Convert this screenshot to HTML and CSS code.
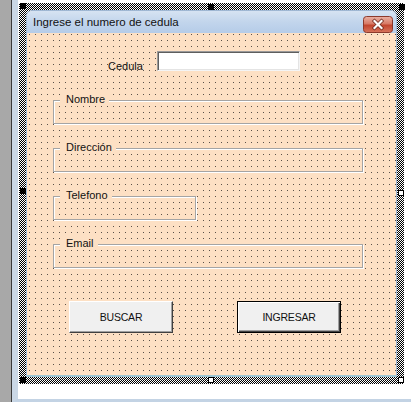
FILE: index.html
```html
<!DOCTYPE html>
<html>
<head>
<meta charset="utf-8">
<title>UserForm</title>
<link rel="stylesheet" href="styles.css">
</head>
<body>
<div class="side"></div>
<div class="canvas">
  <div class="sel">
    <span class="h h-tl"></span>
    <span class="h h-tm"></span>
    <span class="h h-tr"></span>
    <span class="h h-ml"></span>
    <span class="h hollow h-mr"></span>
    <span class="h h-bl"></span>
    <span class="h hollow h-bm"></span>
    <span class="h hollow h-br"></span>
    <div class="form">
      <div class="titlebar">
        <span class="title">Ingrese el numero de cedula</span>
        <span class="close">
          <svg width="30" height="17" viewBox="0 0 30 17">
            <defs>
              <linearGradient id="cg" x1="0" y1="0" x2="0" y2="1">
                <stop offset="0" stop-color="#eab2a5"/>
                <stop offset="0.45" stop-color="#d77a66"/>
                <stop offset="0.55" stop-color="#c2462f"/>
                <stop offset="1" stop-color="#d7745c"/>
              </linearGradient>
            </defs>
            <rect x="0.5" y="0.5" width="29" height="16" rx="3" fill="url(#cg)" stroke="#8c3a2c"/>
            <path d="M11.5 5 L18.5 12 M18.5 5 L11.5 12" stroke="#6a2418" stroke-width="3.6" stroke-linecap="square"/>
            <path d="M11.5 5 L18.5 12 M18.5 5 L11.5 12" stroke="#ffffff" stroke-width="2.2" stroke-linecap="square"/>
          </svg>
        </span>
      </div>
      <div class="body">
        <div class="row-cedula">
          <span class="lbl">Cedula</span>
          <div class="textbox"></div>
        </div>
        <div class="frame"><span class="legend">Nombre</span></div>
        <div class="frame"><span class="legend">Dirección</span></div>
        <div class="frame narrow"><span class="legend">Telefono</span></div>
        <div class="frame"><span class="legend">Email</span></div>
        <div class="buttons">
          <div class="btn">BUSCAR</div>
          <div class="btn default">INGRESAR</div>
        </div>
      </div>
    </div>
  </div>
</div>
</body>
</html>
```

FILE: styles.css
```css
html, body {
  margin: 0;
  height: 100%;
}

body {
  display: flex;
  background: #ffffff;
  font-family: "Liberation Sans", Arial, sans-serif;
  overflow: hidden;
}

.side {
  flex: none;
  width: 11px;
  background: #a8a8a8;
  border-right: 1px solid #3a3a3a;
}

.canvas {
  flex: 1;
  height: 402px;
  box-sizing: border-box;
  background: #ffffff;
  border-left: 6px solid #cad7e5;
  border-bottom: 3px solid #c3d3e4;
  padding-top: 3px;
}

.sel {
  position: relative;
  margin-left: 1px;
  width: 385px;
  height: 381px;
  box-sizing: border-box;
  padding: 7px;
  background: repeating-conic-gradient(#000 0 25%, #fff 0 50%) 0 0 / 2px 2px;
}

.h {
  position: absolute;
  width: 6px;
  height: 6px;
  box-sizing: border-box;
  background: #000;
}

.h.hollow {
  background: #fff;
  border: 1px solid #000;
}

.h-tl { left: 1px; top: 0; }
.h-tm { left: 189px; top: 1px; }
.h-tr { left: 380px; top: 1px; }
.h-ml { left: 1px; top: 185px; }
.h-mr { left: 379px; top: 187px; }
.h-bl { left: 1px; top: 374px; }
.h-bm { left: 189px; top: 374px; }
.h-br { left: 379px; top: 374px; }

.form {
  width: 371px;
  height: 367px;
  box-sizing: border-box;
  display: flex;
  flex-direction: column;
  border: 1px solid #9fb7d3;
  border-bottom: 2px solid #9ec6d3;
  border-radius: 6px 6px 0 0;
  overflow: hidden;
  background: #fde0c4;
}

.titlebar {
  flex: none;
  height: 22px;
  display: flex;
  align-items: center;
  justify-content: space-between;
  padding: 0 3px 0 6px;
  background: linear-gradient(#d6e3f2, #c2d5ec 50%, #b5cce8);
}

.title {
  font-size: 11.5px;
  color: #111;
  line-height: 14px;
}

.close {
  display: flex;
  margin-top: 4px;
}

.body {
  flex: 1;
  padding-top: 18px;
  background: conic-gradient(from 270deg at 1px 1px, #5a5048 90deg, transparent 0) 2px 1px / 6px 6px, #fde0c4;
}

.row-cedula {
  display: flex;
  align-items: flex-start;
  padding-left: 81px;
}

.lbl {
  width: 49px;
  margin-top: 9px;
  font-size: 11px;
  line-height: 13px;
  color: #111;
}

.textbox {
  width: 143px;
  height: 20px;
  box-sizing: border-box;
  background: #fff;
  border: 1px solid;
  border-color: #9a9a9a #f4f4f4 #f4f4f4 #9a9a9a;
  box-shadow: inset 1px 1px 0 #5e5e5e, inset -1px -1px 0 #e4e4e4;
}

.frame {
  position: relative;
  margin-left: 26px;
  margin-top: 24px;
  width: 310px;
  height: 24px;
  box-sizing: border-box;
  border: 1px solid #a4a4a4;
  box-shadow: inset 1px 1px 0 #ffffff, 1px 1px 0 #ffffff;
}

.row-cedula + .frame {
  margin-top: 27px;
}

.frame.narrow {
  width: 143px;
}

.legend {
  position: absolute;
  left: 6px;
  top: -8px;
  padding: 0 4px 0 6px;
  font-size: 11px;
  line-height: 13px;
  color: #111;
  background: #fde0c4;
}

.buttons {
  display: flex;
  gap: 64px;
  margin-top: 33px;
  padding-left: 42px;
}

.btn {
  width: 104px;
  height: 32px;
  box-sizing: border-box;
  display: flex;
  align-items: center;
  justify-content: center;
  font-size: 10.5px;
  letter-spacing: -0.2px;
  color: #111;
  background: #f0f0f0;
  border: 1px solid;
  border-color: #ffffff #404040 #404040 #ffffff;
  box-shadow: inset -1px -1px 0 #a0a0a0;
}

.btn.default {
  border: 1px solid #000;
  box-shadow: inset 1px 1px 0 #ffffff, inset -1px -1px 0 #404040, inset -2px -2px 0 #a0a0a0;
}
```
